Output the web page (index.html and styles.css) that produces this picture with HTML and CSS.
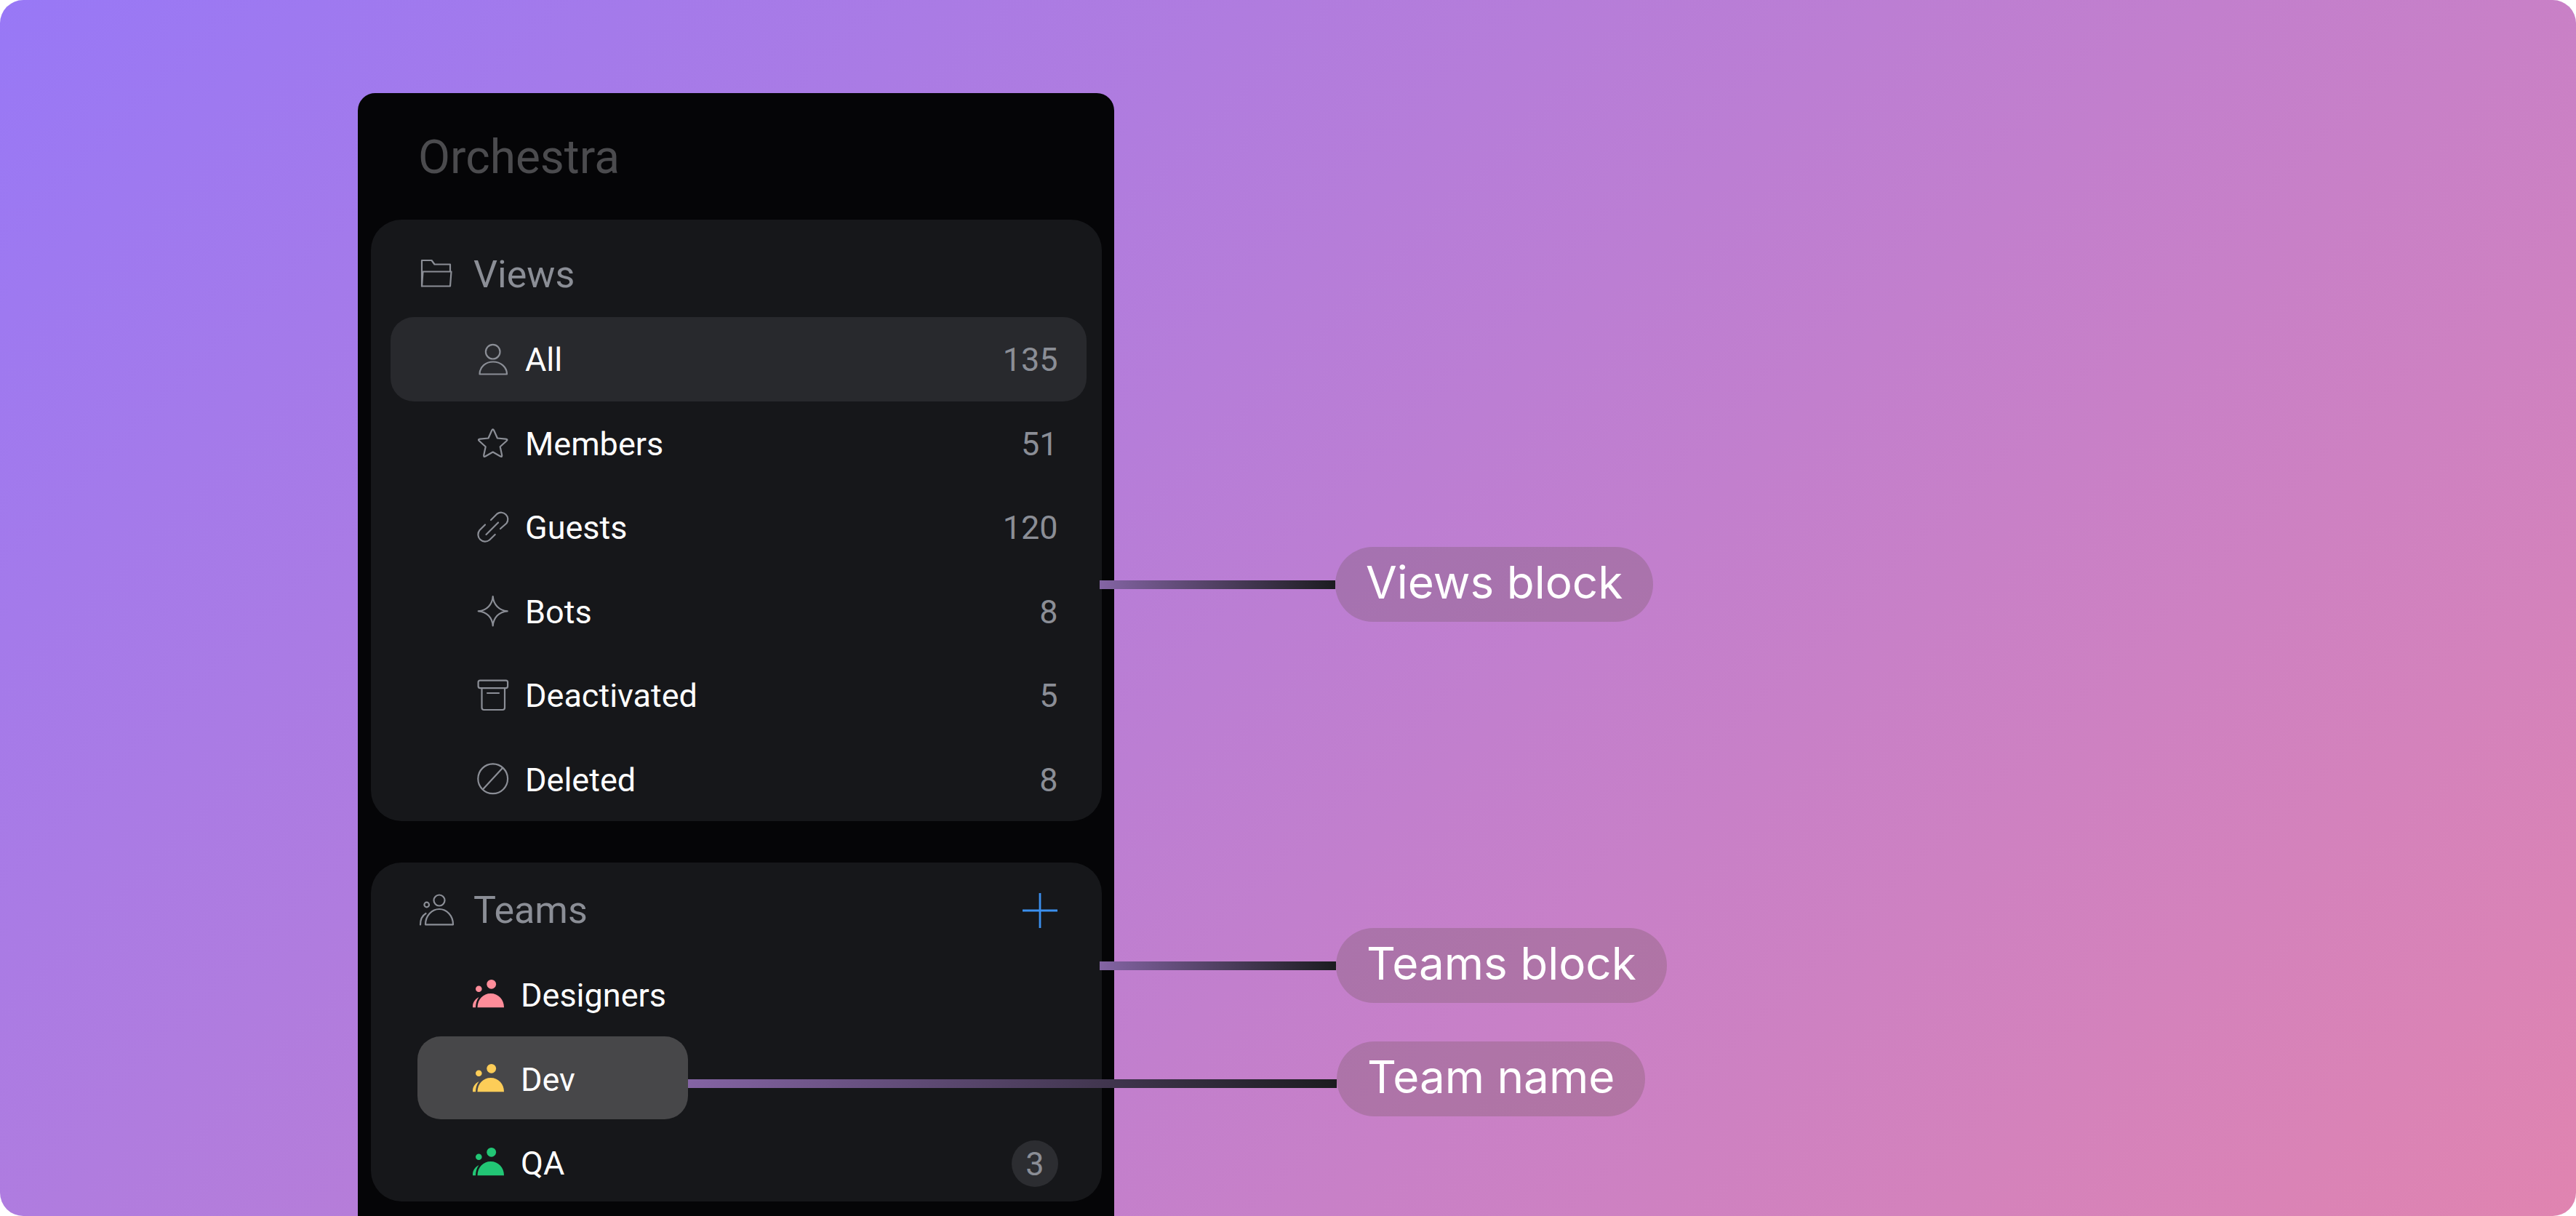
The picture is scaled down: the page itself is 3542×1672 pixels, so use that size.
FILE: index.html
```html
<!DOCTYPE html>
<html lang="en">
<head>
  <meta charset="UTF-8" />
  <meta name="viewport" content="width=device-width, initial-scale=1.0"/>
  <title>Orchestra - Sidebar blocks</title>
  <link rel="stylesheet" href="styles.css">
</head>
<body>
  <div class="canvas">
    <aside class="sidebar">
      <div class="brand">Orchestra</div>

      <section class="block block-views">
        <div class="block-head">
          <svg class="icon" viewBox="0 0 44 44"><path d="M2 38.5V3h13.5l4 5.5H41V18"/><path d="M2 38.5 3.5 18.5H42.5L41 38.5Z"/></svg>
          <span>Views</span>
        </div>
        <div class="row active">
          <svg class="icon" viewBox="0 0 44 44"><circle cx="21.7" cy="11.7" r="9.8"/><path d="M3.5 42.5H41C41 32 32 25.5 22 25.5S3.5 32 3.5 42.5Z"/></svg>
          <span class="row-name">All</span>
          <span class="row-count">135</span>
        </div>
        <div class="row">
          <svg class="icon" viewBox="0 0 44 44"><path d="M20.15 5Q21.7 1.5 23.25 5L27.9 15.5 39.3 16.6Q43.1 17 40.25 19.55L31.7 27.2 34.1 38.45Q34.9 42.2 31.6 40.3L21.7 34.5 11.8 40.3Q8.5 42.2 9.3 38.45L11.7 27.2 3.15 19.55Q.3 17 4.1 16.6L15.5 15.5Z"/></svg>
          <span class="row-name">Members</span>
          <span class="row-count">51</span>
        </div>
        <div class="row">
          <svg class="icon" viewBox="0 0 44 44"><path d="M19 12 27.5 3.5A9.3 9.3 0 0 1 40.5 16.5L32 24"/><path d="M24.7 32 17 39.5A9.6 9.6 0 0 1 3.5 26L11 18.5"/><path d="M12.5 32 29 15.5"/></svg>
          <span class="row-name">Guests</span>
          <span class="row-count">120</span>
        </div>
        <div class="row">
          <svg class="icon" viewBox="0 0 44 44"><path d="M21.7 2C22.5 13 30 21.5 41.7 22.3 30 23 22.5 31.5 21.7 42.5 21 31.5 13.5 23 1.7 22.3 13.5 21.5 21 13 21.7 2Z"/></svg>
          <span class="row-name">Bots</span>
          <span class="row-count">8</span>
        </div>
        <div class="row">
          <svg class="icon" viewBox="0 0 44 44"><rect x="1.6" y="1.6" width="40.5" height="10.5" rx="2.5"/><path d="M6.5 12.5V39a3 3 0 0 0 3 3H35a3 3 0 0 0 3-3V12.5"/><path d="M14 19H30"/></svg>
          <span class="row-name">Deactivated</span>
          <span class="row-count">5</span>
        </div>
        <div class="row">
          <svg class="icon" viewBox="0 0 44 44"><circle cx="21.7" cy="21.8" r="20.4"/><path d="M35 7 8.7 35.5"/></svg>
          <span class="row-name">Deleted</span>
          <span class="row-count">8</span>
        </div>
      </section>

      <section class="block block-teams">
        <div class="block-head">
          <svg class="icon" viewBox="0 0 44 44"><circle cx="26" cy="8" r="7.5"/><circle cx="8.7" cy="14" r="3.3"/><path d="M7 41.3H45C45 29 36 20 26 20S7 29 7 41.3Z"/><path d="M0 41.5C0 34 2.5 29 7.5 26"/></svg>
          <span>Teams</span>
          <svg class="plus" viewBox="0 0 50 50"><path d="M25 1V49M1 25H49"/></svg>
        </div>
        <div class="team-row">
          <div class="team-cell">
            <svg class="team-icon pink" viewBox="0 0 44 44"><circle cx="25.7" cy="6.3" r="6.4"/><circle cx="8.3" cy="12.7" r="4.3"/><path d="M6.5 38.3H43C43 27 35 19 24.7 19S6.5 27 6.5 38.3Z"/><path d="M0 38.3V36C.5 30 4 26.5 8.5 24 5.5 28 4 33 4 38.3Z"/></svg>
            <span class="team-name">Designers</span>
          </div>
        </div>
        <div class="team-row">
          <div class="team-cell selected">
            <svg class="team-icon yellow" viewBox="0 0 44 44"><circle cx="25.7" cy="6.3" r="6.4"/><circle cx="8.3" cy="12.7" r="4.3"/><path d="M6.5 38.3H43C43 27 35 19 24.7 19S6.5 27 6.5 38.3Z"/><path d="M0 38.3V36C.5 30 4 26.5 8.5 24 5.5 28 4 33 4 38.3Z"/></svg>
            <span class="team-name">Dev</span>
          </div>
        </div>
        <div class="team-row">
          <div class="team-cell">
            <svg class="team-icon green" viewBox="0 0 44 44"><circle cx="25.7" cy="6.3" r="6.4"/><circle cx="8.3" cy="12.7" r="4.3"/><path d="M6.5 38.3H43C43 27 35 19 24.7 19S6.5 27 6.5 38.3Z"/><path d="M0 38.3V36C.5 30 4 26.5 8.5 24 5.5 28 4 33 4 38.3Z"/></svg>
            <span class="team-name">QA</span>
          </div>
          <span class="badge">3</span>
        </div>
      </section>
    </aside>

    <!-- callouts drawn over the sidebar -->
    <div class="callout callout-views">
      <div class="line"></div>
      <div class="pill">Views block</div>
    </div>
    <div class="callout callout-teams">
      <div class="line"></div>
      <div class="pill">Teams block</div>
    </div>
    <div class="callout callout-name">
      <div class="line"></div>
      <div class="pill">Team name</div>
    </div>
  </div>
</body>
</html>
```

FILE: styles.css
```css
* {
  margin: 0;
  padding: 0;
  box-sizing: border-box;
}

html,
body {
  background-color: #fff;
}

body {
  width: 3542px;
  height: 1672px;
  overflow: hidden;
  font-family: 'Roboto', sans-serif;
  color: #fff;
}

.canvas {
  position: relative;
  width: 3542px;
  height: 1672px;
  padding: 128px 0 0 492px;
  overflow: hidden;
  border-radius: 32px;
  background: linear-gradient(135deg, #9878f6 0%, #e084b0 100%);
}

.sidebar {
  width: 1040px;
  height: 1544px;
  padding: 0 17.5px 0 18px;
  background-color: #050507;
  border-radius: 24px 24px 0 0;
}

.brand {
  display: flex;
  align-items: center;
  height: 174px;
  padding: 3px 0 0 65px;
  font-size: 64px;
  color: #4b4b4e;
}

.block {
  background-color: #16171a;
  border-radius: 42px;
  overflow: hidden;
}

.block-views {
  height: 827px;
  margin-bottom: 57px;
}

.block-teams {
  height: 466px;
}

.block-head {
  display: flex;
  align-items: center;
  gap: 29px;
  padding: 0 60px 0 68px;
  font-size: 52px;
  color: #8b8e96;
}

.block-views .block-head {
  height: 134px;
  padding-top: 16px;
}

.block-teams .block-head {
  height: 122.5px;
  padding-top: 8.5px;
}

.icon {
  flex: none;
  width: 44px;
  height: 44px;
  overflow: visible;
  fill: none;
  stroke: #8b8e96;
  stroke-width: 2.2;
  stroke-linejoin: round;
  stroke-linecap: round;
}

.plus {
  flex: none;
  width: 50px;
  height: 50px;
  margin-left: auto;
  fill: none;
  stroke: #3b8fee;
  stroke-width: 2.8;
}

.row {
  display: flex;
  align-items: center;
  gap: 22px;
  height: 115.5px;
  margin: 0 21px 0 27px;
  padding: 0 39px 0 119px;
  border-radius: 32px;
  font-size: 45px;
}

.row.active {
  background-color: #28292d;
}

.row-name {
  padding-top: 2px;
}

.row-count {
  margin-left: auto;
  padding-top: 2px;
  color: #8b8e96;
}

.team-row {
  display: flex;
  align-items: center;
  height: 115.5px;
  margin: 0 59.5px 0 64px;
  font-size: 45px;
}

.team-cell {
  display: flex;
  align-items: center;
  gap: 22px;
  width: 372px;
  height: 114px;
  padding-left: 76px;
  border-radius: 32px;
}

.team-cell.selected {
  background-color: #474749;
}

.team-name {
  padding-top: 5px;
}

.team-icon {
  flex: none;
  width: 44px;
  height: 44px;
  margin-top: 6px;
  overflow: visible;
  fill: currentColor;
}

.pink {
  color: #ff8d9a;
}

.yellow {
  color: #fdcd58;
}

.green {
  color: #22c675;
}

.badge {
  display: flex;
  align-items: center;
  justify-content: center;
  width: 64px;
  height: 64px;
  margin: 6px 0 0 auto;
  border-radius: 50%;
  background-color: #2c2d31;
  color: #8b8e96;
}

.callout {
  position: absolute;
  display: flex;
  align-items: flex-start;
}

.callout-views {
  left: 1512px;
  top: 752px;
}

.callout-teams {
  left: 1512px;
  top: 1276px;
}

.callout-name {
  left: 946px;
  top: 1432px;
}

.line {
  height: 12px;
  margin-top: 46px;
  background: linear-gradient(90deg, #8464a4, #1c1c20);
}

.callout-views .line {
  width: 324px;
}

.callout-teams .line {
  width: 325px;
}

.callout-name .line {
  width: 892px;
  margin-top: 52px;
}

.pill {
  display: flex;
  align-items: center;
  height: 103px;
  padding: 0 42px 6px;
  border-radius: 52px;
  background-color: rgba(74, 68, 42, 0.2);
  font-family: 'Inter', sans-serif;
  font-size: 62px;
  white-space: nowrap;
}
```
